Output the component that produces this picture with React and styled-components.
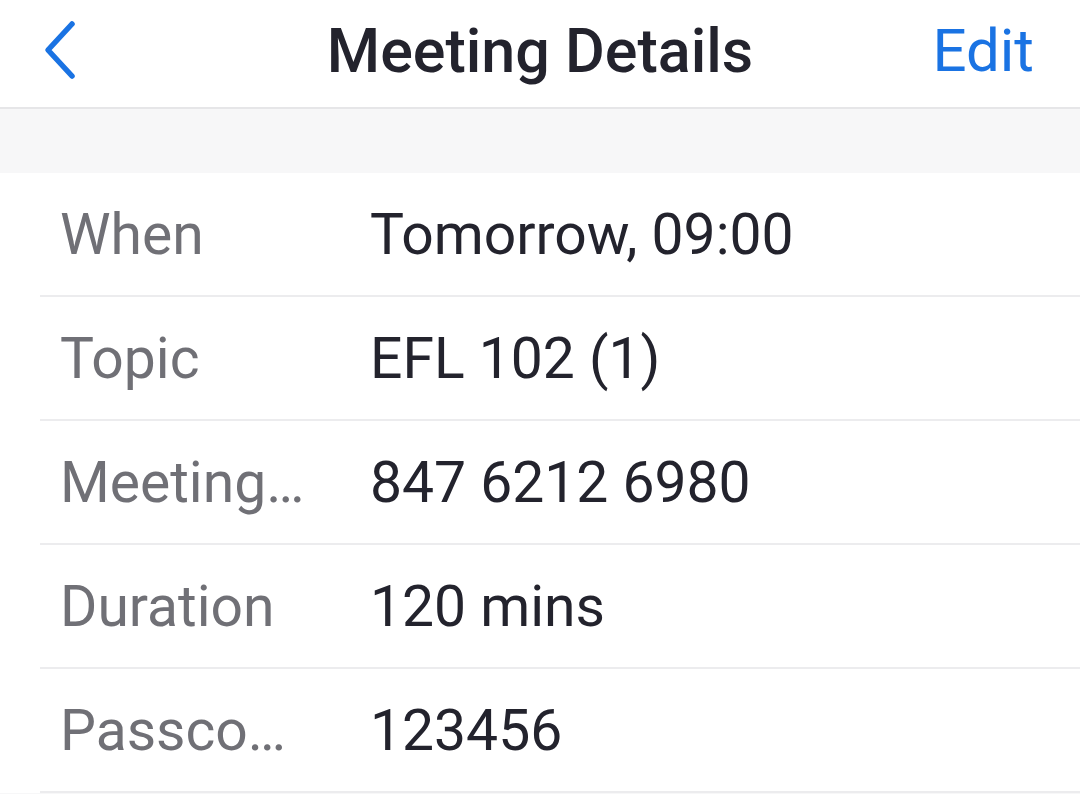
import React from 'react';
import styled, { createGlobalStyle } from 'styled-components';

const GlobalStyle = createGlobalStyle`
  html, body {
    margin: 0;
    padding: 0;
    background: #ffffff;
    font-family: Roboto, "Noto Sans", sans-serif;
  }
`;

const Page = styled.div`
  width: 1080px;
  height: 794px;
  background: #f7f7f8;
  overflow: hidden;
`;

const Header = styled.div`
  height: 107px;
  display: grid;
  grid-template-columns: 200px 1fr 200px;
  align-items: center;
  background: #ffffff;
  border-bottom: 2px solid #e6e6e8;
`;

const BackButton = styled.button`
  justify-self: start;
  margin-left: 40px;
  margin-bottom: 8px;
  padding: 0;
  border: none;
  background: none;
  display: flex;
  align-items: center;
  cursor: pointer;
`;

const Title = styled.h1`
  margin: 0 0 6px;
  text-align: center;
  font-size: 61px;
  font-weight: 500;
  color: #23232d;
  white-space: nowrap;
`;

const EditButton = styled.button`
  justify-self: end;
  margin: 0 46px 6px 0;
  padding: 0;
  border: none;
  background: none;
  font-family: inherit;
  font-size: 60px;
  font-weight: 400;
  color: #1a73e3;
  cursor: pointer;
`;

const Spacer = styled.div`
  height: 64px;
`;

const List = styled.div`
  background: #ffffff;
  padding-left: 40px;
`;

const Row = styled.div`
  height: 122px;
  display: flex;
  align-items: center;
  border-bottom: 2px solid #ececee;
`;

const Label = styled.span`
  width: 310px;
  padding-left: 20px;
  font-size: 57px;
  color: #707076;
  white-space: nowrap;
`;

const Value = styled.span`
  font-size: 57px;
  color: #23232d;
`;

const rows = [
  ['When', 'Tomorrow, 09:00'],
  ['Topic', 'EFL 102 (1)'],
  ['Meeting…', '847 6212 6980'],
  ['Duration', '120 mins'],
  ['Passco…', '123456'],
];

const App = () => (
  <Page>
    <GlobalStyle />
    <Header>
      <BackButton aria-label="Back">
        <svg width="40" height="60" viewBox="0 0 40 60">
          <path d="M32 4 L8 30 L32 56" fill="none" stroke="#1a73e3" strokeWidth="5.5" strokeLinecap="round" strokeLinejoin="round" />
        </svg>
      </BackButton>
      <Title>Meeting Details</Title>
      <EditButton>Edit</EditButton>
    </Header>
    <Spacer />
    <List>
      {rows.map(([label, value]) => (
        <Row key={label}>
          <Label>{label}</Label>
          <Value>{value}</Value>
        </Row>
      ))}
    </List>
  </Page>
);

export default App;
